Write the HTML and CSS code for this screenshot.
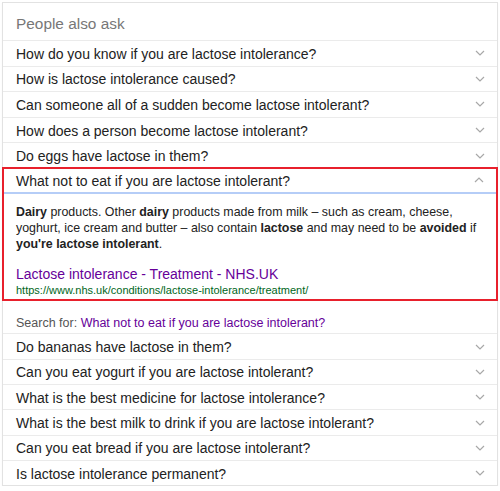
FILE: index.html
```html
<!DOCTYPE html>
<html>
<head>
<meta charset="utf-8">
<link rel="stylesheet" href="styles.css">
</head>
<body>
<div class="card">
  <div class="head">People also ask</div>
  <div class="row"><span>How do you know if you are lactose intolerance?</span><svg class="chev" viewBox="0 0 10 6"><path d="M1 1l4 4 4-4"/></svg></div>
  <div class="row"><span>How is lactose intolerance caused?</span><svg class="chev" viewBox="0 0 10 6"><path d="M1 1l4 4 4-4"/></svg></div>
  <div class="row"><span>Can someone all of a sudden become lactose intolerant?</span><svg class="chev" viewBox="0 0 10 6"><path d="M1 1l4 4 4-4"/></svg></div>
  <div class="row"><span>How does a person become lactose intolerant?</span><svg class="chev" viewBox="0 0 10 6"><path d="M1 1l4 4 4-4"/></svg></div>
  <div class="row"><span>Do eggs have lactose in them?</span><svg class="chev" viewBox="0 0 10 6"><path d="M1 1l4 4 4-4"/></svg></div>
  <div class="open">
    <div class="row q"><span>What not to eat if you are lactose intolerant?</span><svg class="chev" viewBox="0 0 10 6"><path d="M1 5l4-4 4 4"/></svg></div>
    <div class="answer">
      <p class="snippet"><b>Dairy</b> products. Other <b>dairy</b> products made from milk – such as cream, cheese, yoghurt, ice cream and butter – also contain <b>lactose</b> and may need to be <b>avoided</b> if <b>you're lactose intolerant</b>.</p>
      <a class="title" href="#">Lactose intolerance - Treatment - NHS.UK</a>
      <div class="url">https://www.nhs.uk/conditions/lactose-intolerance/treatment/</div>
    </div>
  </div>
  <div class="search">Search for: <a href="#">What not to eat if you are lactose intolerant?</a></div>
  <div class="row low"><span>Do bananas have lactose in them?</span><svg class="chev" viewBox="0 0 10 6"><path d="M1 1l4 4 4-4"/></svg></div>
  <div class="row low"><span>Can you eat yogurt if you are lactose intolerant?</span><svg class="chev" viewBox="0 0 10 6"><path d="M1 1l4 4 4-4"/></svg></div>
  <div class="row low"><span>What is the best medicine for lactose intolerance?</span><svg class="chev" viewBox="0 0 10 6"><path d="M1 1l4 4 4-4"/></svg></div>
  <div class="row low"><span>What is the best milk to drink if you are lactose intolerant?</span><svg class="chev" viewBox="0 0 10 6"><path d="M1 1l4 4 4-4"/></svg></div>
  <div class="row low"><span>Can you eat bread if you are lactose intolerant?</span><svg class="chev" viewBox="0 0 10 6"><path d="M1 1l4 4 4-4"/></svg></div>
  <div class="row low"><span>Is lactose intolerance permanent?</span><svg class="chev" viewBox="0 0 10 6"><path d="M1 1l4 4 4-4"/></svg></div>
</div>
</body>
</html>
```
FILE: styles.css
```css
html, body {
  margin: 0;
  padding: 0;
  background: #fff;
}
body {
  font-family: "Liberation Sans", Arial, sans-serif;
  color: #222;
}
.card {
  margin: 2px 0 0 2px;
  width: 494px;
  border: 1px solid #e2e2e2;
  box-shadow: 0 1px 1px rgba(0,0,0,0.06);
}
.head {
  height: 37px;
  padding-left: 13px;
  font-size: 15.4px;
  line-height: 41px;
  color: #777;
}
.row {
  display: flex;
  align-items: center;
  justify-content: space-between;
  height: 24.6px;
  border-top: 1px solid #ebebeb;
  padding: 0 12px 0 13px;
  font-size: 14px;
}
.row.low {
  height: 24.33px;
}
.row span {
  line-height: 18px;
  padding-top: 1px;
}
.chev {
  width: 10px;
  height: 6px;
  fill: none;
  stroke: #a8a8a8;
  stroke-width: 1.2;
}
.open {
  margin: -1px -1px 0 -1px;
  border: 2px solid #e8202c;
}
.open .row.q {
  border-top: none;
  height: 23px;
  border-bottom: 2px solid #b5cdf7;
  padding: 0 12px 0 12px;
}
.answer {
  padding: 10px 12px 2px 12px;
}
.snippet {
  margin: 0;
  font-size: 12.4px;
  line-height: 16px;
}
.title {
  display: block;
  margin-top: 14.5px;
  font-size: 14px;
  line-height: 17px;
  color: #660099;
  text-decoration: none;
}
.url {
  font-size: 11px;
  line-height: 14px;
  color: #006621;
}
.search {
  height: 32px;
  box-sizing: border-box;
  padding: 14px 0 0 13px;
  line-height: 16px;
  font-size: 12.5px;
  color: #555;
}
.search a {
  color: #660099;
  text-decoration: none;
}
```
